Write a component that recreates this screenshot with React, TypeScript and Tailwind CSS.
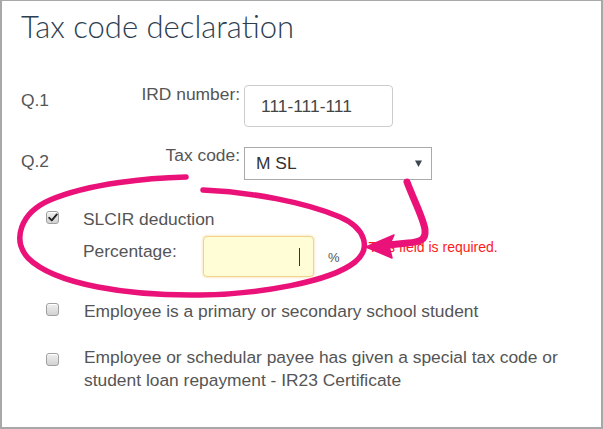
import React from "react";

function Checkbox({ checked = false }: { checked?: boolean }) {
  return (
    <span className="relative flex h-[13px] w-[13px] shrink-0 items-center justify-center rounded-[3px] border border-[#a0a0a0] bg-linear-to-b from-[#f0f0f0] to-[#d2d2d2] shadow-[inset_0_1px_0_#ffffff]">
      {checked && (
        <svg width="10" height="9" viewBox="0 0 10 9">
          <path d="M1.2 4.8 L3.8 7.4 L8.8 1.4" fill="none" stroke="#222" strokeWidth="1.9" strokeLinecap="round" strokeLinejoin="round" />
        </svg>
      )}
    </span>
  );
}

export default function App() {
  return (
    <div className="relative h-[429px] w-[603px] overflow-hidden bg-white font-['Liberation_Sans',Arial,sans-serif] text-[17.4px] text-[#555]">
      <div className="box-border h-full w-full border-x-2 border-t border-b-2 border-[#a8a8a8] pl-[19px] pt-[10px]">
        <h1 className="font-['Lato','Open_Sans',sans-serif] text-[31px] font-light leading-[31px] text-[#2c3e50]">
          Tax code declaration
        </h1>

        {/* Q.1 */}
        <div className="mt-[42px] flex items-start">
          <div className="mt-[6px] w-[60px] leading-[20px]">Q.1</div>
          <div className="w-[159px] text-right leading-[20px]">IRD number:</div>
          <div className="ml-[4px] mt-[1px] box-border flex h-[42px] w-[149px] items-center rounded-[4px] border border-[#cccccc] pl-[16px] text-[#444]">
            111-111-111
          </div>
        </div>

        {/* Q.2 */}
        <div className="mt-[18px] flex items-start">
          <div className="mt-[6px] w-[60px] leading-[20px]">Q.2</div>
          <div className="w-[159px] text-right leading-[20px]">Tax code:</div>
          <div className="ml-[4px] mt-[2px] box-border flex h-[33px] w-[188px] items-center justify-between border border-[#aaaaaa] pl-[11px] pr-[9px] text-[#333]">
            <span>M SL</span>
            <svg width="7" height="7" viewBox="0 0 7 7">
              <polygon points="0,0.5 7,0.5 3.5,7" fill="#3d4650" />
            </svg>
          </div>
        </div>

        {/* SLCIR */}
        <div className="mt-[29px] flex items-start">
          <div className="ml-[25px] mt-[2px]">
            <Checkbox checked />
          </div>
          <div className="ml-[24px] leading-[20px]">SLCIR deduction</div>
        </div>

        <div className="mt-[7px] flex items-start">
          <div className="ml-[62px] mt-[5px] w-[120px] leading-[20px]">Percentage:</div>
          <div className="box-border flex h-[41px] w-[111px] items-center rounded-[4px] border border-[#f3d28a] bg-[#fffdd6] pl-[95px] shadow-[0_0_3px_rgba(240,200,110,0.7)]">
            <span className="h-[18px] w-px bg-[#333]" />
          </div>
          <div className="ml-[14px] mt-[14px] text-[13px] leading-[16px]">%</div>
          <div className="ml-[29px] mt-[3px] text-[14px] leading-[16px] text-[#ff1a1a]">This field is required.</div>
        </div>

        {/* Student */}
        <div className="mt-[24px] flex items-start">
          <div className="ml-[25px] mt-[2px]">
            <Checkbox />
          </div>
          <div className="ml-[25px] leading-[20px]">Employee is a primary or secondary school student</div>
        </div>

        {/* IR23 */}
        <div className="mt-[25px] flex items-start">
          <div className="ml-[25px] mt-[7px]">
            <Checkbox />
          </div>
          <div className="ml-[25px] w-[500px] leading-[23px]">
            Employee or schedular payee has given a special tax code or student loan repayment - IR23 Certificate
          </div>
        </div>
      </div>

      <svg className="pointer-events-none absolute left-0 top-0" width="603" height="429" viewBox="0 0 603 429">
        <path
          d="M186,177 C150,178 90,183 50,200 C20,213 12,240 28,258 C55,285 130,296 200,295 C260,294 330,282 355,262 C372,248 365,228 340,217 C305,202 250,192 203,190"
          fill="none"
          stroke="#ea1279"
          strokeWidth="5.5"
          strokeLinecap="round"
        />
        <path
          d="M407,182 C415,203 424,220 425,230 C426,240 420,242 408,243 L388,245"
          fill="none"
          stroke="#ea1279"
          strokeWidth="7"
          strokeLinecap="round"
          strokeLinejoin="round"
        />
        <polygon points="366,247 394,235 389,246 392,258" fill="#ea1279" stroke="#ea1279" strokeWidth="1.5" strokeLinejoin="round" />
      </svg>
    </div>
  );
}
